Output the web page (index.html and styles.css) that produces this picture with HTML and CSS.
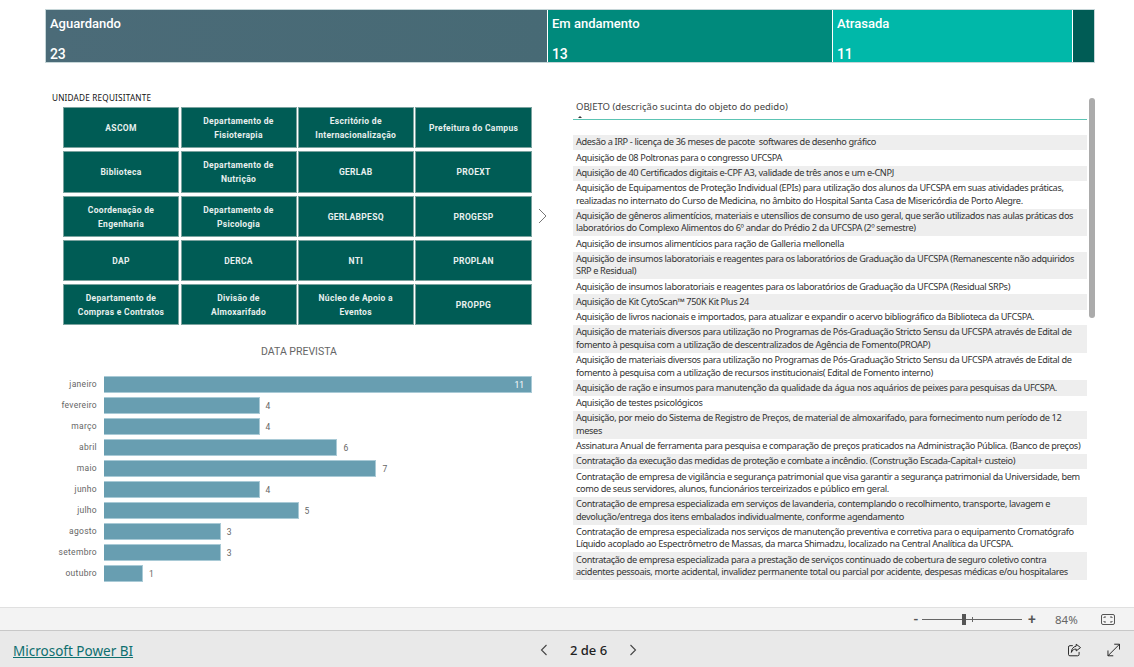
FILE: index.html
```html
<!DOCTYPE html>
<html lang="pt-BR">
<head>
    <meta charset="UTF-8">
    <title>Microsoft Power BI</title>
    <link rel="stylesheet" href="styles.css">
</head>
<body>
    <main class="report">
        <div class="kpi-bar">
            <div class="kpi kpi-waiting"><span>Aguardando</span><span>23</span></div>
            <div class="kpi kpi-progress"><span>Em andamento</span><span>13</span></div>
            <div class="kpi kpi-late"><span>Atrasada</span><span>11</span></div>
            <div class="kpi kpi-other"></div>
        </div>

        <div class="columns">
            <section class="left">
                <div class="slicer-title">UNIDADE REQUISITANTE</div>
                <div class="slicer-row">
                    <div class="slicer">
                        <div class="tile">ASCOM</div>
                        <div class="tile">Departamento de<br>Fisioterapia</div>
                        <div class="tile">Escritório de<br>Internacionalização</div>
                        <div class="tile">Prefeitura do Campus</div>
                        <div class="tile">Biblioteca</div>
                        <div class="tile">Departamento de<br>Nutrição</div>
                        <div class="tile">GERLAB</div>
                        <div class="tile">PROEXT</div>
                        <div class="tile">Coordenação de<br>Engenharia</div>
                        <div class="tile">Departamento de<br>Psicologia</div>
                        <div class="tile">GERLABPESQ</div>
                        <div class="tile">PROGESP</div>
                        <div class="tile">DAP</div>
                        <div class="tile">DERCA</div>
                        <div class="tile">NTI</div>
                        <div class="tile">PROPLAN</div>
                        <div class="tile">Departamento de<br>Compras e Contratos</div>
                        <div class="tile">Divisão de<br>Almoxarifado</div>
                        <div class="tile">Núcleo de Apoio a<br>Eventos</div>
                        <div class="tile">PROPPG</div>
                    </div>
                    <svg class="slicer-next" width="9" height="16" viewBox="0 0 9 16"><path d="M1 1l7 7-7 7" fill="none" stroke="#777" stroke-width="1"/></svg>
                </div>

                <h2 class="chart-title">DATA PREVISTA</h2>
                <div class="chart">
                    <div class="month">janeiro</div><div class="track"><div class="bar" style="width:100%"><span class="inside">11</span></div></div>
                    <div class="month">fevereiro</div><div class="track"><div class="bar" style="width:36.36%"></div><span class="value">4</span></div>
                    <div class="month">março</div><div class="track"><div class="bar" style="width:36.36%"></div><span class="value">4</span></div>
                    <div class="month">abril</div><div class="track"><div class="bar" style="width:54.55%"></div><span class="value">6</span></div>
                    <div class="month">maio</div><div class="track"><div class="bar" style="width:63.64%"></div><span class="value">7</span></div>
                    <div class="month">junho</div><div class="track"><div class="bar" style="width:36.36%"></div><span class="value">4</span></div>
                    <div class="month">julho</div><div class="track"><div class="bar" style="width:45.45%"></div><span class="value">5</span></div>
                    <div class="month">agosto</div><div class="track"><div class="bar" style="width:27.27%"></div><span class="value">3</span></div>
                    <div class="month">setembro</div><div class="track"><div class="bar" style="width:27.27%"></div><span class="value">3</span></div>
                    <div class="month">outubro</div><div class="track"><div class="bar" style="width:9.09%"></div><span class="value">1</span></div>
                </div>
            </section>

            <section class="list">
                <div class="list-head">OBJETO (descrição sucinta do objeto do pedido)<i class="sort-caret"></i></div>
                <div class="rows">
                    <div class="row">Adesão a IRP - licença de 36 meses de pacote&nbsp; softwares de desenho gráfico</div>
                    <div class="row">Aquisição de 08 Poltronas para o congresso UFCSPA</div>
                    <div class="row">Aquisição de 40 Certificados digitais e-CPF A3, validade de três anos e um e-CNPJ</div>
                    <div class="row">Aquisição de Equipamentos de Proteção Individual (EPIs) para utilização dos alunos da UFCSPA em suas atividades práticas,<br>realizadas no internato do Curso de Medicina, no âmbito do Hospital Santa Casa de Misericórdia de Porto Alegre.</div>
                    <div class="row">Aquisição de gêneros alimentícios, materiais e utensílios de consumo de uso geral, que serão utilizados nas aulas práticas dos<br>laboratórios do Complexo Alimentos do 6º andar do Prédio 2 da UFCSPA (2º semestre)</div>
                    <div class="row">Aquisição de insumos alimentícios para ração de Galleria mellonella</div>
                    <div class="row">Aquisição de insumos laboratoriais e reagentes para os laboratórios de Graduação da UFCSPA (Remanescente não adquiridos<br>SRP e Residual)</div>
                    <div class="row">Aquisição de insumos laboratoriais e reagentes para os laboratórios de Graduação da UFCSPA (Residual SRPs)</div>
                    <div class="row">Aquisição de Kit CytoScan™ 750K Kit Plus 24</div>
                    <div class="row">Aquisição de livros nacionais e importados, para atualizar e expandir o acervo bibliográfico da Biblioteca da UFCSPA.</div>
                    <div class="row">Aquisição de materiais diversos para utilização no Programas de Pós-Graduação Stricto Sensu da UFCSPA através de Edital de<br>fomento à pesquisa com a utilização de descentralizados de Agência de Fomento(PROAP)</div>
                    <div class="row">Aquisição de materiais diversos para utilização no Programas de Pós-Graduação Stricto Sensu da UFCSPA através de Edital de<br>fomento à pesquisa com a utilização de recursos institucionais( Edital de Fomento interno)</div>
                    <div class="row">Aquisição de ração e insumos para manutenção da qualidade da água nos aquários de peixes para pesquisas da UFCSPA.</div>
                    <div class="row">Aquisição de testes psicológicos</div>
                    <div class="row">Aquisição, por meio do Sistema de Registro de Preços, de material de almoxarifado, para fornecimento num período de 12<br>meses</div>
                    <div class="row">Assinatura Anual de ferramenta para pesquisa e comparação de preços praticados na Administração Pública. (Banco de preços)</div>
                    <div class="row">Contratação da execução das medidas de proteção e combate a incêndio. (Construção Escada-Capital+ custeio)</div>
                    <div class="row">Contratação de empresa de vigilância e segurança patrimonial que visa garantir a segurança patrimonial da Universidade, bem<br>como de seus servidores, alunos, funcionários terceirizados e público em geral.</div>
                    <div class="row">Contratação de empresa especializada em serviços de lavanderia, contemplando o recolhimento, transporte, lavagem e<br>devolução/entrega dos itens embalados individualmente, conforme agendamento</div>
                    <div class="row">Contratação de empresa especializada nos serviços de manutenção preventiva e corretiva para o equipamento Cromatógrafo<br>Líquido acoplado ao Espectrômetro de Massas, da marca Shimadzu, localizado na Central Analítica da UFCSPA.</div>
                    <div class="row">Contratação de empresa especializada para a prestação de serviços continuado de cobertura de seguro coletivo contra<br>acidentes pessoais, morte acidental, invalidez permanente total ou parcial por acidente, despesas médicas e/ou hospitalares</div>
                </div>
                <div class="scroll-thumb"></div>
            </section>
        </div>
    </main>

    <div class="zoom-bar">
        <span class="zoom-btn">-</span>
        <div class="zoom-slider"><i class="zoom-tick"></i><i class="zoom-thumb"></i></div>
        <span class="zoom-btn">+</span>
        <span class="zoom-pct">84%</span>
        <svg class="fit-icon" width="14" height="11" viewBox="0 0 14 11" fill="none" stroke="#555"><rect x=".5" y=".5" width="13" height="10" rx="1.5"/><path d="M3 4V3h2M9 3h2v1M11 7v1H9M5 8H3V7"/></svg>
    </div>

    <footer class="footer">
        <a class="brand" href="#">Microsoft Power BI</a>
        <div class="pager">
            <svg width="8" height="12" viewBox="0 0 8 12"><path d="M6.5 1l-5 5 5 5" fill="none" stroke="#444" stroke-width="1.1"/></svg>
            <span class="page-label">2 de 6</span>
            <svg width="8" height="12" viewBox="0 0 8 12"><path d="M1.5 1l5 5-5 5" fill="none" stroke="#444" stroke-width="1.1"/></svg>
        </div>
        <div class="actions">
            <svg width="14" height="14" viewBox="0 0 14 14" fill="none" stroke="#222"><path d="M5 2.5H2a1.500 1.500 0 0 0-1.500 1.500v7.500A1.500 1.500 0 0 0 2 13h8a1.500 1.500 0 0 0 1.500-1.500V9"/><path d="M8.500 1l4.500 3.500L8.500 8V6C6 6 4.500 7 3.500 9.500 3.500 6 5.500 3.500 8.500 3z"/></svg>
            <svg width="14" height="14" viewBox="0 0 14 14" fill="none" stroke="#222"><path d="M1 13L13 1M7.500 1H13v5.500M1 7.500V13h5.500"/></svg>
        </div>
    </footer>
</body>
</html>
```

FILE: styles.css
```css
* {
    box-sizing: border-box;
}
body {
    margin: 0;
    height: 667px;
    overflow: hidden;
    display: flex;
    flex-direction: column;
    background: white;
    font-family: "Noto Sans", sans-serif;
}
.report {
    height: 607px;
    padding: 9px 0 0 45px;
    overflow: hidden;
}

/* status cards */
.kpi-bar {
    display: flex;
    gap: 1px;
    width: 1050px;
    height: 54px;
    background: #fff;
    border: 1px solid #c6d6d8;
}
.kpi {
    display: flex;
    flex-direction: column;
    justify-content: space-between;
    padding: 5px 4px 0;
    color: white;
    font-family: Roboto, sans-serif;
    font-weight: 500;
    font-size: 13px;
    line-height: 17px;
}
.kpi span:last-child {
    font-size: 14px;
    letter-spacing: -.2px;
    margin-bottom: -1px;
}
.kpi-waiting {
    width: 501px;
    background: linear-gradient(90deg, #4b6b78, #476a75);
}
.kpi-progress {
    width: 284px;
    background: #008a7c;
}
.kpi-late {
    width: 239px;
    background: #00b8a9;
}
.kpi-other {
    flex: 1;
    background: #005c55;
}

.columns {
    display: flex;
}
.left {
    width: 528px;
}

/* slicer */
.slicer-title {
    margin: 29px 0 0 7px;
    font-size: 8.200px;
    line-height: 12px;
    letter-spacing: .2px;
    color: #111;
}
.slicer-row {
    display: flex;
    align-items: center;
    margin: 3px 0 0 18px;
}
.slicer {
    display: grid;
    grid-template-columns: 116px 116px 115.500px 117px;
    grid-template-rows: 41px 42px 41px 41px 41px;
    gap: 3px 1.500px;
    width: 469px;
}
.tile {
    display: flex;
    align-items: center;
    justify-content: center;
    text-align: center;
    background: #005c55;
    border: 1px solid #7ba39f;
    color: #e8f0ef;
    font-family: Roboto, sans-serif;
    font-weight: 700;
    font-size: 8.500px;
    line-height: 14px;
    letter-spacing: .3px;
}
.slicer-next {
    margin-left: 6px;
}

/* bar chart */
.chart-title {
    margin: 20px 0 0;
    text-align: center;
    padding-right: 20px;
    font-family: Roboto, sans-serif;
    font-weight: 400;
    font-size: 10.500px;
    line-height: 14px;
    color: #666;
}
.chart {
    display: grid;
    grid-template-columns: 59px 428px;
    grid-auto-rows: 17px;
    row-gap: 4px;
    margin-top: 17px;
    width: 487px;
}
.month {
    padding-right: 7px;
    text-align: right;
    font-family: Roboto, sans-serif;
    font-size: 8.500px;
    line-height: 17px;
    letter-spacing: .3px;
    color: #666;
}
.track {
    display: flex;
    align-items: center;
}
.bar {
    display: flex;
    align-items: center;
    justify-content: flex-end;
    height: 17px;
    background: #689eb1;
    border: 1px solid #a9cad6;
    border-left: 0;
}
.inside {
    padding-right: 7px;
    color: white;
    font-family: Roboto, sans-serif;
    font-size: 8.500px;
}
.value {
    margin-left: 6px;
    color: #666;
    font-family: Roboto, sans-serif;
    font-size: 8.500px;
}

/* list */
.list {
    position: relative;
    width: 522px;
    margin-top: 35px;
}
.list-head {
    position: relative;
    height: 22px;
    padding: 2px 0 0 3px;
    width: 514px;
    border-bottom: 1px solid #5cc4b4;
    font-size: 9.500px;
    line-height: 13px;
    color: #444;
}
.sort-caret {
    position: absolute;
    left: 5px;
    bottom: 1px;
    border: 2.500px solid transparent;
    border-top: 0;
    border-bottom: 2.500px solid #333;
}
.rows {
    width: 514px;
    margin-top: 15px;
}
.row {
    padding: 1.450px 3px;
    font-size: 9.200px;
    line-height: 12.400px;
    letter-spacing: -.36px;
    color: #333;
    white-space: nowrap;
}
.row:nth-child(odd) {
    background: #eeeeee;
}
.scroll-thumb {
    position: absolute;
    top: 0;
    left: 516px;
    width: 6px;
    height: 220px;
    border-radius: 3px;
    background: #ababab;
}

/* bottom bars */
.zoom-bar {
    display: flex;
    align-items: center;
    height: 24px;
    padding-left: 912px;
    background: #f3f3f3;
    border-top: 1px solid #e0e0e0;
    border-bottom: 1px solid #c8c8c8;
}
.zoom-btn {
    width: 8px;
    font-family: Roboto, sans-serif;
    font-weight: 500;
    font-size: 14px;
    line-height: 16px;
    color: #555;
    text-align: center;
}
.zoom-slider {
    position: relative;
    width: 100px;
    height: 1px;
    margin: 0 6px 0 2px;
    background: #666;
}
.zoom-tick {
    position: absolute;
    left: 50px;
    top: -2px;
    width: 1px;
    height: 5px;
    background: #666;
}
.zoom-thumb {
    position: absolute;
    left: 40px;
    top: -5px;
    width: 4px;
    height: 11px;
    background: #555;
}
.zoom-pct {
    margin-left: 19px;
    font-size: 11.500px;
    color: #666;
}
.fit-icon {
    margin-left: 23px;
}
.footer {
    flex: 1;
    display: flex;
    align-items: center;
    padding: 2px 14px 0 13px;
    background: #e9e9e9;
}
.brand {
    width: 527px;
    margin-top: 1px;
    font-size: 13.500px;
    color: #0e6f6f;
}
.pager {
    display: flex;
    align-items: center;
    gap: 20px;
    font-size: 13px;
    font-weight: 500;
    color: #222;
}
.page-label {
    width: 41px;
    text-align: center;
}
.actions {
    display: flex;
    gap: 25px;
    width: 52px;
    margin-left: auto;
}
```
